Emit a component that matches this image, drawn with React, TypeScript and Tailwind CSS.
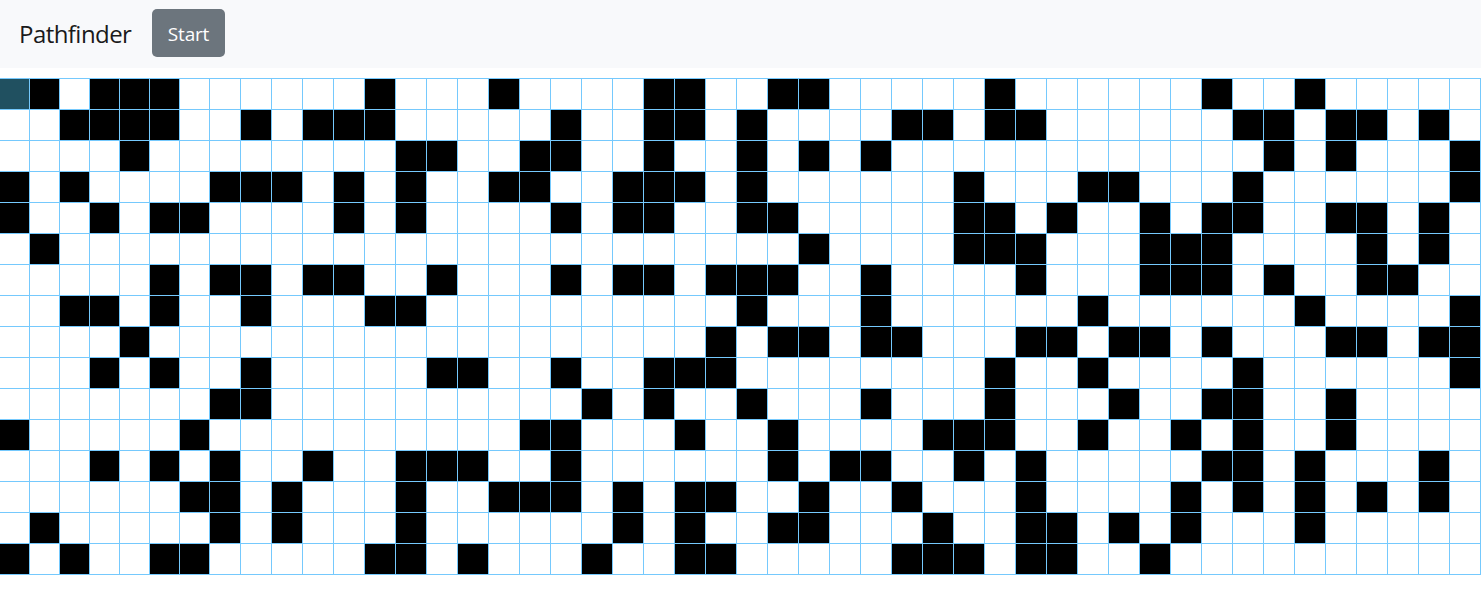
const COLS = 48;
const SHORT_COLS = 7;

const WALLS: number[][] = [
  [1, 3, 4, 5, 12, 16, 21, 22, 25, 26, 32, 39, 42],
  [2, 3, 4, 5, 8, 10, 11, 12, 18, 21, 22, 24, 29, 30, 32, 33, 40, 41, 43, 44, 46],
  [4, 13, 14, 17, 18, 21, 24, 26, 28, 41, 43, 47],
  [0, 2, 7, 8, 9, 11, 13, 16, 17, 20, 21, 22, 24, 31, 35, 36, 40, 47],
  [0, 3, 5, 6, 11, 13, 18, 20, 21, 24, 25, 31, 32, 34, 37, 39, 40, 43, 44, 46],
  [1, 26, 31, 32, 33, 37, 38, 39, 44, 46],
  [5, 7, 8, 10, 11, 14, 18, 20, 21, 23, 24, 25, 28, 33, 37, 38, 39, 41, 44, 45],
  [2, 3, 5, 8, 12, 13, 24, 28, 35, 42, 47],
  [4, 23, 25, 26, 28, 29, 33, 34, 36, 37, 39, 43, 44, 46, 47],
  [3, 5, 8, 14, 15, 18, 21, 22, 23, 32, 35, 40, 47],
  [7, 8, 19, 21, 24, 28, 32, 36, 39, 40, 43],
  [0, 6, 17, 18, 22, 25, 30, 31, 32, 35, 38, 40, 43],
  [3, 5, 7, 10, 13, 14, 15, 18, 25, 27, 28, 31, 33, 39, 40, 42, 46],
  [6, 7, 9, 13, 16, 17, 18, 20, 22, 23, 26, 29, 33, 38, 40, 42, 44, 46],
  [1, 7, 9, 13, 20, 22, 25, 26, 30, 33, 34, 36, 38, 42],
  [0, 2, 5, 6, 12, 13, 15, 19, 22, 23, 29, 30, 31, 33, 34, 37],
];

function Cell({ row, col }: { row: number; col: number }) {
  const width = col < SHORT_COLS ? "w-[30px]" : "w-[31px]";
  const isStart = row === 0 && col === 0;
  const fill = isStart ? "bg-[#205060]" : WALLS[row].includes(col) ? "bg-black" : "bg-white";
  return <div className={`h-[31px] shrink-0 border-r border-b border-[#75c9fd] ${width} ${fill}`} />;
}

export default function App() {
  return (
    <div className="h-[592px] overflow-hidden bg-white font-['Open_Sans',sans-serif]">
      <nav className="flex h-[68px] items-center gap-5 bg-[#f8f9fb] pl-[19px]">
        <span className="w-[113px] whitespace-nowrap text-2xl font-normal tracking-[-0.55px] text-[#1a1a1a]">
          Pathfinder
        </span>
        <button className="mb-0.5 h-12 w-[73px] rounded-[5px] bg-[#6c757d] pt-0.5 text-[19px] tracking-[-0.2px] text-white">
          Start
        </button>
      </nav>
      <main className="mt-2.5 border-t border-[#75c9fd]">
        {WALLS.map((_, row) => (
          <div key={row} className="flex">
            {Array.from({ length: COLS }, (_, col) => (
              <Cell key={col} row={row} col={col} />
            ))}
          </div>
        ))}
      </main>
    </div>
  );
}
